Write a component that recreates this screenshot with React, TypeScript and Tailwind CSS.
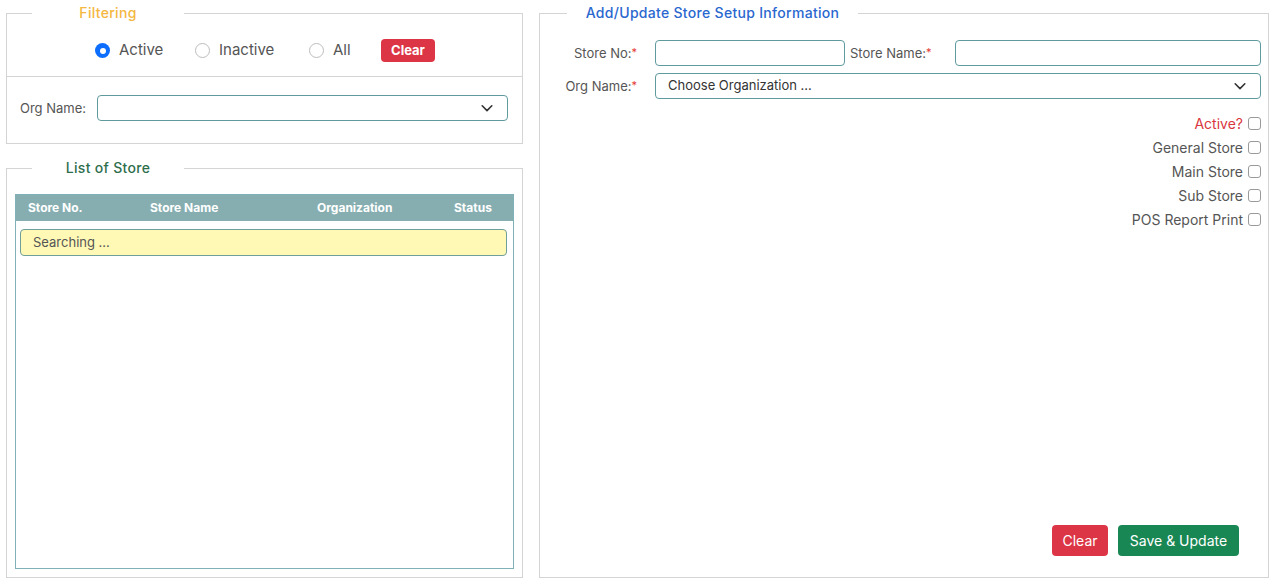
import React from 'react';

const Chevron = () => (
  <svg width="14" height="14" viewBox="0 0 16 16" fill="none" stroke="#333" strokeWidth="1.8" strokeLinecap="round" strokeLinejoin="round">
    <path d="M2.5 5.5L8 11l5.5-5.5" />
  </svg>
);

function Radio({ label, checked, width }: { label: string; checked?: boolean; width: string }) {
  return (
    <label className={`flex items-center gap-[9px] ${width}`}>
      {checked ? (
        <span className="w-[15px] h-[15px] rounded-full bg-[#0d6efd] flex items-center justify-center">
          <span className="w-[6px] h-[6px] rounded-full bg-white" />
        </span>
      ) : (
        <span className="w-[15px] h-[15px] rounded-full border border-[#bdbdbd] bg-white" />
      )}
      <span className="text-[15px] text-[#555]">{label}</span>
    </label>
  );
}

function Check({ label, red }: { label: string; red?: boolean }) {
  return (
    <div className="h-[24px] flex items-center justify-end gap-[5px]">
      <span className={`text-[14px] ${red ? 'text-[#d9363e]' : 'text-[#555]'}`}>{label}</span>
      <span className="w-[13px] h-[13px] rounded-[3px] border border-[#9a9a9a] bg-white" />
    </div>
  );
}

const Req = () => <span className="text-[#e53935] text-[11px] align-top">*</span>;

export default function App() {
  return (
    <div className="flex gap-[16px] pl-[6px] pr-[8px] pt-[3px] h-[585px] bg-white font-['Inter',sans-serif] text-[#333]">
      {/* left column */}
      <div className="w-[517px] flex flex-col">
        <fieldset className="border border-[#d4d4d4] h-[141px]">
          <legend className="ml-[25px] text-left text-[14px] leading-[20px] font-medium text-[#f4b740]">
            <span className="block w-[152px] text-center tracking-[0.3px]">Filtering</span>
          </legend>
          <div className="flex items-center h-[23px] mt-[16px] pl-[88px]">
            <Radio label="Active" checked width="w-[100px]" />
            <Radio label="Inactive" width="w-[114px]" />
            <Radio label="All" width="w-[72px]" />
            <button className="h-[23px] w-[54px] rounded-[4px] bg-[#dc3545] text-white text-[13px] font-bold">Clear</button>
          </div>
          <div className="border-t border-[#d4d4d4] mt-[14px]" />
          <div className="flex items-center mt-[18px] pl-[13px] pr-[14px]">
            <span className="w-[77px] shrink-0 pt-[2px] text-[13px] text-[#555]">Org Name:</span>
            <div className="flex-1 h-[26px] border border-[#5f9a9d] rounded-[4px] flex items-center justify-end pr-[13px]">
              <Chevron />
            </div>
          </div>
        </fieldset>

        <fieldset className="border border-[#d4d4d4] mt-[14px] h-[420px]">
          <legend className="ml-[25px] text-left text-[14px] leading-[20px] font-medium text-[#2e6e4c]">
            <span className="block w-[152px] text-center tracking-[0.3px]">List of Store</span>
          </legend>
          <div className="mt-[16px] ml-[8px] mr-[8px] h-[375px] border border-[#7fb1b6]">
            <div className="h-[26px] bg-[#86aeb1] flex items-center pl-[12px] text-white text-[12px] font-bold">
              <span className="w-[122px]">Store No.</span>
              <span className="w-[167px]">Store Name</span>
              <span className="w-[137px]">Organization</span>
              <span>Status</span>
            </div>
            <div className="mt-[8px] ml-[4px] mr-[6px] h-[27px] bg-[#fff9b5] border border-[#6f9f9a] rounded-[4px] flex items-center pl-[12px] text-[13px] text-[#555]">
              Searching ...
            </div>
          </div>
        </fieldset>
      </div>

      {/* right column */}
      <fieldset className="flex-1 border border-[#d4d4d4] h-[575px]">
        <legend className="ml-[27px] text-left text-[14px] leading-[20px] font-medium text-[#2a67cf]">
          <span className="block w-[291px] text-center tracking-[0.3px]">Add/Update Store Setup Information</span>
        </legend>
        <div className="flex items-center mt-[17px] pr-[7px]">
          <span className="w-[97px] pt-[2px] text-right text-[13px] text-[#555]">Store No:<Req /></span>
          <div className="ml-[18px] w-[190px] h-[26px] border border-[#5f9a9d] rounded-[4px]" />
          <span className="ml-[5px] w-[105px] pt-[2px] text-[13px] text-[#555]">Store Name:<Req /></span>
          <div className="flex-1 h-[26px] border border-[#5f9a9d] rounded-[4px]" />
        </div>
        <div className="flex items-center mt-[7px] pr-[7px]">
          <span className="w-[97px] pt-[2px] text-right text-[13px] text-[#555]">Org Name:<Req /></span>
          <div className="ml-[18px] flex-1 h-[26px] border border-[#5f9a9d] rounded-[4px] flex items-center justify-between pl-[12px] pr-[13px]">
            <span className="text-[13px] text-[#333]">Choose Organization ...</span>
            <Chevron />
          </div>
        </div>
        <div className="mt-[12px] pr-[7px] h-[120px] flex flex-col">
          <Check label="Active?" red />
          <Check label="General Store" />
          <Check label="Main Store" />
          <Check label="Sub Store" />
          <Check label="POS Report Print" />
        </div>
        <div className="mt-[294px] flex justify-end gap-[10px] pr-[29px]">
          <button className="h-[31px] w-[56px] rounded-[4px] bg-[#dc3545] text-white text-[14px]">Clear</button>
          <button className="h-[31px] w-[121px] rounded-[4px] bg-[#198754] text-white text-[14px]">Save &amp; Update</button>
        </div>
      </fieldset>
    </div>
  );
}
